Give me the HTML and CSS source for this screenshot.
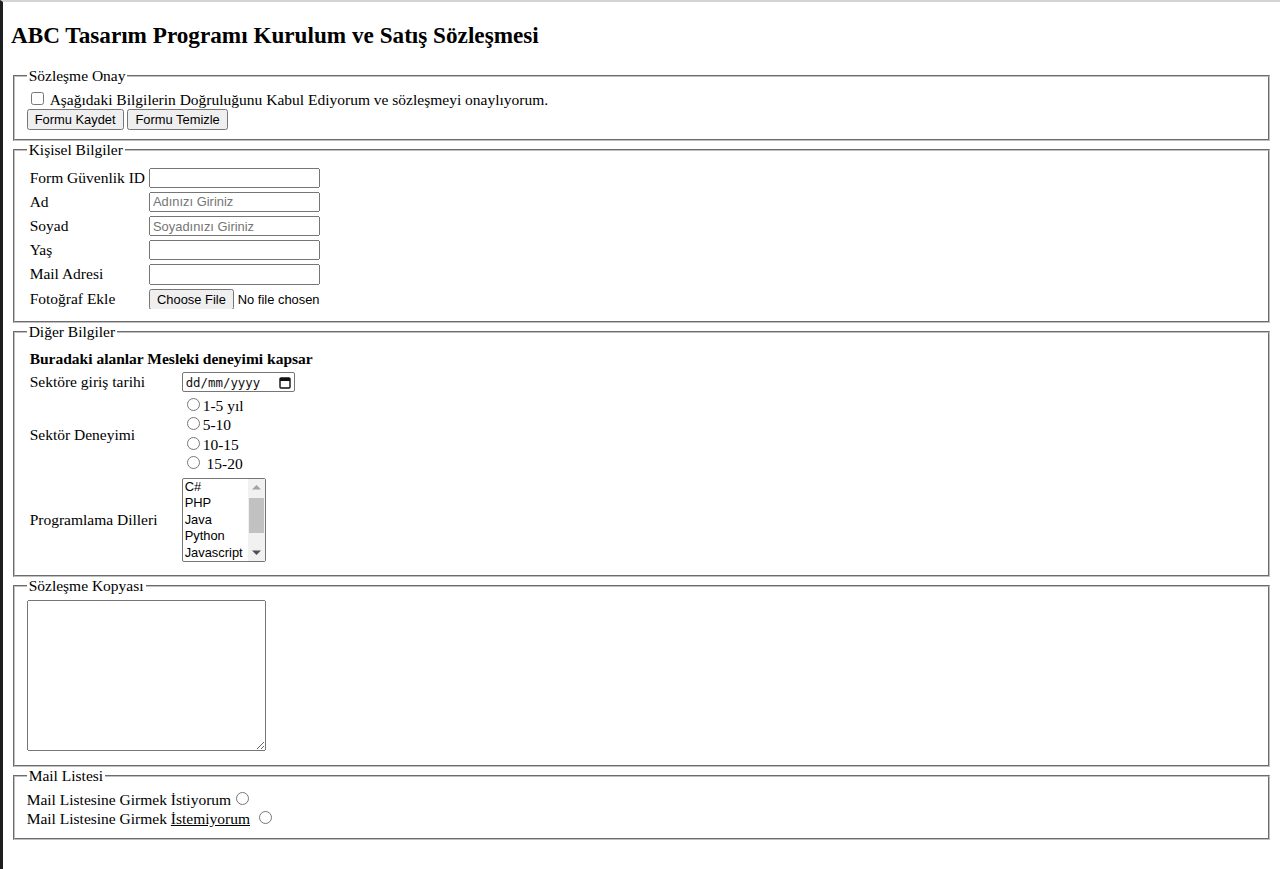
FILE: index.html
```html
<!DOCTYPE html>
<html lang="tr">
<head>
<meta charset="utf-8">
<title>ABC Tasarım Programı Kurulum ve Satış Sözleşmesi</title>
<link rel="stylesheet" href="styles.css">
</head>
<body>
<h2 class="title">ABC Tasarım Programı Kurulum ve Satış Sözleşmesi</h2>
<form class="form">
  <fieldset class="group group-tight">
    <legend class="group-legend">Sözleşme Onay</legend>
    <input type="checkbox" class="check"> Aşağıdaki Bilgilerin Doğruluğunu Kabul Ediyorum ve sözleşmeyi onaylıyorum.<br>
    <button type="button" class="btn">Formu Kaydet</button>
    <button type="reset" class="btn">Formu Temizle</button>
  </fieldset>
  <fieldset class="group">
    <legend class="group-legend">Kişisel Bilgiler</legend>
    <table class="grid">
      <tr><td>Form Güvenlik ID</td><td><input type="text" class="field"></td></tr>
      <tr><td>Ad</td><td><input type="text" class="field" placeholder="Adınızı Giriniz"></td></tr>
      <tr><td>Soyad</td><td><input type="text" class="field" placeholder="Soyadınızı Giriniz"></td></tr>
      <tr><td>Yaş</td><td><input type="text" class="field"></td></tr>
      <tr><td>Mail Adresi</td><td><input type="email" class="field"></td></tr>
      <tr><td>Fotoğraf Ekle</td><td><input type="file" class="file"></td></tr>
    </table>
  </fieldset>
  <fieldset class="group">
    <legend class="group-legend">Diğer Bilgiler</legend>
    <table class="grid">
      <tr><td colspan="2"><b>Buradaki alanlar Mesleki deneyimi kapsar</b></td></tr>
      <tr><td class="label-wide">Sektöre giriş tarihi</td><td><span class="date" role="textbox"><span class="date-text">dd/mm/yyyy</span><svg class="date-icon" width="12" height="13" viewBox="0 0 12 13" aria-hidden="true"><rect x="1" y="2" width="10" height="10" rx="1" fill="none" stroke="#111" stroke-width="1.4"/><rect x="1" y="2" width="10" height="3" fill="#111"/></svg></span></td></tr>
      <tr><td class="label-wide">Sektör Deneyimi</td><td class="radios">
        <input type="radio" name="exp" class="radio">1-5 yıl<br>
        <input type="radio" name="exp" class="radio">5-10<br>
        <input type="radio" name="exp" class="radio">10-15<br>
        <input type="radio" name="exp" class="radio"> 15-20
      </td></tr>
      <tr><td class="label-wide">Programlama Dilleri</td><td>
        <span class="list-wrap">
          <select multiple size="5" class="list">
            <option>C#</option>
            <option>PHP</option>
            <option>Java</option>
            <option>Python</option>
            <option>Javascript</option>
            <option>Ruby</option>
            <option>Go</option>
          </select>
          <span class="scrollbar" aria-hidden="true">
            <svg class="sb-arrow" width="17" height="17" viewBox="0 0 17 17"><polygon points="4,10.5 8.5,6 13,10.5" fill="#a3a3a3"/></svg>
            <span class="sb-track"><span class="sb-thumb"></span></span>
            <svg class="sb-arrow" width="17" height="17" viewBox="0 0 17 17"><polygon points="4,6.5 8.5,11 13,6.5" fill="#505050"/></svg>
          </span>
        </span>
      </td></tr>
    </table>
  </fieldset>
  <fieldset class="group">
    <legend class="group-legend">Sözleşme Kopyası</legend>
    <textarea class="copy"></textarea>
  </fieldset>
  <fieldset class="group">
    <legend class="group-legend">Mail Listesi</legend>
    <div class="mail-lines">
      Mail Listesine Girmek İstiyorum<input type="radio" name="mail" class="radio"><br>
      Mail Listesine Girmek <u>İstemiyorum</u> <input type="radio" name="mail" class="radio">
    </div>
  </fieldset>
</form>
</body>
</html>
```
FILE: styles.css
```css
html {
  border-left: 3px solid #1e1e1e;
  border-top: 2px solid #d4d4d4;
  min-height: 100%;
  box-sizing: border-box;
  background: #fff;
}
body {
  margin: 8px;
  font-family: "Liberation Serif", "Times New Roman", serif;
  font-size: 15.5px;
  color: #000;
}
.title {
  font-size: 23.2px;
  font-weight: bold;
  margin: 12px 0 18px;
}
.form {
  margin: 0;
}
.group {
  margin: 0 2px;
  padding: 0.35em 0.75em 0.625em;
  border: 2px groove #c0c0c0;
}
.group-tight {
  padding-top: 0.25em;
  padding-bottom: 0.6em;
}
.group-legend {
  padding: 0 2px;
}
.grid {
  border-spacing: 2px;
}
.grid td {
  padding: 1px;
}
.label-wide {
  width: 148px;
}
.btn {
  font-family: "Liberation Sans", Arial, sans-serif;
  font-size: 12.9px;
}
.file {
  font-family: "Liberation Sans", Arial, sans-serif;
  font-size: 12.9px;
  height: 20px;
}
.field {
  font-family: "Liberation Sans", Arial, sans-serif;
  font-size: 12.9px;
  width: 171px;
  height: 20.2px;
  box-sizing: border-box;
}
.radio {
  margin: 2px 3px 0 5px;
}
.radios {
  line-height: 19.5px;
}
.mail-lines {
  line-height: 19px;
}
.date {
  display: inline-flex;
  align-items: center;
  justify-content: space-between;
  box-sizing: border-box;
  width: 113px;
  height: 19.5px;
  padding: 0 3px;
  border: 1px solid #767676;
  border-radius: 2px;
  vertical-align: middle;
  background: #fff;
}
.date-text {
  font-family: "DejaVu Sans Mono", "Liberation Mono", monospace;
  font-size: 12.4px;
  color: #111;
}
.date-icon {
  display: block;
}
.list-wrap {
  position: relative;
  display: inline-block;
  vertical-align: middle;
}
.list {
  display: block;
  font-family: "Liberation Sans", Arial, sans-serif;
  font-size: 12.9px;
  width: 84px;
  height: 84px;
  box-sizing: border-box;
  padding-right: 17px;
  overflow: hidden;
}
.scrollbar {
  position: absolute;
  top: 1px;
  right: 1px;
  bottom: 1px;
  width: 17px;
  display: flex;
  flex-direction: column;
  background: #f1f1f1;
}
.sb-arrow {
  display: block;
  flex: none;
}
.sb-track {
  flex: 1;
  display: flex;
  flex-direction: column;
  padding: 2px 1px 0;
}
.sb-thumb {
  height: 35px;
  background: #c1c1c1;
}
.copy {
  width: 239px;
  height: 151px;
  box-sizing: border-box;
  font-family: "Liberation Mono", monospace;
}
```
